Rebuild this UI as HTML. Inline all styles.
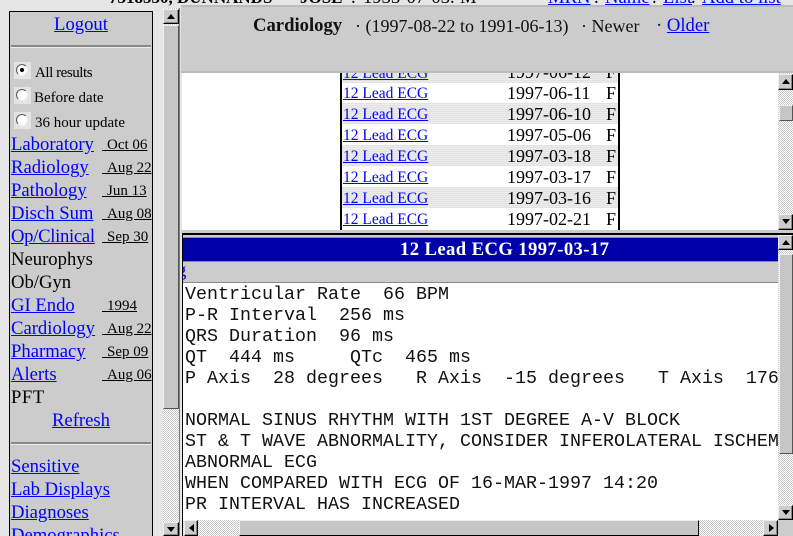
<!DOCTYPE html>
<html><head><meta charset="utf-8"><style>
html,body{margin:0;padding:0;overflow:hidden;width:793px;height:536px}
body{position:relative;background:#e6e6e6;font-family:"Liberation Serif",serif;color:#000}
div{position:absolute;box-sizing:border-box;white-space:pre}
#w{left:0;top:0;width:793px;height:536px;overflow:hidden}
a{color:#00f;text-decoration:underline}
.l{left:11px;font-size:18.67px;line-height:23px;height:23px}
.d{left:102px;font-size:15px;line-height:23px;height:23px;text-decoration:underline}
.d span{letter-spacing:1.25px}
.r{left:35px;font-size:15px;line-height:20px}
.rb{left:14px;width:17px;height:17px;background:#e4e4e4}
.rb i{position:absolute;left:2px;top:2px;width:12px;height:12px;border-radius:50%;background:#fff;border:1px solid;border-color:#555 #eee #eee #555;box-sizing:border-box}
.rb b{position:absolute;left:6px;top:6px;width:4px;height:4px;border-radius:50%;background:#000}
.t{left:161px;font-size:15.5px;line-height:21px}
.dt{left:325px;font-size:18px;line-height:21px}
.f{left:424px;font-size:18px;line-height:21px}
.m{left:185px;font-family:"Liberation Mono",monospace;font-size:18.33px;line-height:21px;color:#111}
.track{background:repeating-conic-gradient(#c8c8c8 0 25%,#fff 0 50%) 0 0/2px 2px}
.btn{background:#ccc;border:1px solid;border-color:#eee #000 #000 #eee;box-shadow:inset -1px -1px 0 #888}
.thumb{background:#c6c6c6;border:1px solid;border-color:#eee #555 #555 #eee}
.up:after,.dn:after,.lt:after,.rt:after{content:"";position:absolute;width:0;height:0}
.up:after{left:3px;top:4px;border:4px solid transparent;border-top:0;border-bottom:5px solid #000}
.dn:after{left:3px;top:4px;border:4px solid transparent;border-bottom:0;border-top:5px solid #000}
.lt:after{left:4px;top:3px;border:4px solid transparent;border-left:0;border-right:5px solid #000}
.rt:after{left:5px;top:3px;border:4px solid transparent;border-right:0;border-left:5px solid #000}
.stripe{left:342px;width:276px;height:21px;background:repeating-linear-gradient(#e2e2e2 0 1px,#ececec 1px 2px)}
.h{top:-13px;font-size:18.67px;line-height:21px}
.hd{top:15px;font-size:18px;line-height:22px;color:#111}
</style></head><body><div id="w">

<div class="h" style="left:109px;font-weight:bold;font-size:17px">7318530, DUNNANDS</div>
<div class="h" style="left:300px;font-weight:bold;font-size:17px">JOSE</div>
<div class="h" style="left:351px">.</div>
<div class="h" style="left:363px">1933-07-03</div>
<div class="h" style="left:450px">.</div>
<div class="h" style="left:460px">M</div>
<div class="h" style="left:548px"><a>MRN</a></div>
<div class="h" style="left:594px">.</div>
<div class="h" style="left:605px"><a>Name</a></div>
<div class="h" style="left:652px">.</div>
<div class="h" style="left:663px"><a>List</a></div>
<div class="h" style="left:691px">.</div>
<div class="h" style="left:702px"><a>Add to list</a></div>

<!-- left panel -->
<div style="left:9px;top:11px;width:144px;height:530px;background:#ccc;border:1px solid #000"></div>
<div style="left:10px;top:13px;width:142px;text-align:center;font-size:18.67px;line-height:23px"><a>Logout</a></div>
<div style="left:11px;top:45px;width:140px;height:3px;background:#888;border-bottom:1px solid #eee"></div>

<div class="rb" style="top:62px"><i></i><b></b></div>
<div class="r" style="top:63px;letter-spacing:-.45px">All results</div>
<div class="rb" style="top:87px"><i></i></div>
<div class="r" style="top:88px;left:34px">Before date</div>
<div class="rb" style="top:112px"><i></i></div>
<div class="r" style="top:113px">36 hour update</div>

<div class="l" style="top:133px"><a>Laboratory</a></div><div class="d" style="top:134px"><span> </span>Oct 06</div>
<div class="l" style="top:156px"><a>Radiology</a></div><div class="d" style="top:157px"><span> </span>Aug 22</div>
<div class="l" style="top:179px"><a>Pathology</a></div><div class="d" style="top:180px"><span> </span>Jun 13</div>
<div class="l" style="top:202px"><a>Disch Sum</a></div><div class="d" style="top:203px"><span> </span>Aug 08</div>
<div class="l" style="top:225px;letter-spacing:-.3px"><a>Op/Clinical</a></div><div class="d" style="top:226px"><span> </span>Sep 30</div>
<div class="l" style="top:248px">Neurophys</div>
<div class="l" style="top:271px">Ob/Gyn</div>
<div class="l" style="top:294px"><a>GI Endo</a></div><div class="d" style="top:295px"><span> </span>1994</div>
<div class="l" style="top:317px"><a>Cardiology</a></div><div class="d" style="top:318px"><span> </span>Aug 22</div>
<div class="l" style="top:340px"><a>Pharmacy</a></div><div class="d" style="top:341px"><span> </span>Sep 09</div>
<div class="l" style="top:363px"><a>Alerts</a></div><div class="d" style="top:364px"><span> </span>Aug 06</div>
<div class="l" style="top:386px;letter-spacing:.5px">PFT</div>
<div style="left:10px;top:409px;width:142px;text-align:center;font-size:18.67px;line-height:23px"><a>Refresh</a></div>
<div style="left:11px;top:442px;width:140px;height:3px;background:#888;border-bottom:1px solid #eee"></div>
<div class="l" style="top:455px"><a>Sensitive</a></div>
<div class="l" style="top:478px"><a>Lab Displays</a></div>
<div class="l" style="top:501px"><a>Diagnoses</a></div>
<div class="l" style="top:524px"><a>Demographics</a></div>

<!-- left scrollbar -->
<div class="track" style="left:163px;top:8px;width:16px;height:528px"></div>
<div class="btn up" style="left:163px;top:9px;width:16px;height:15px"></div>
<div class="thumb" style="left:163px;top:25px;width:16px;height:384px"></div>
<div class="btn dn" style="left:163px;top:522px;width:16px;height:14px"></div>
<div style="left:179px;top:8px;width:1px;height:528px;background:#777"></div>

<!-- top frame -->
<div style="left:181px;top:5px;width:612px;height:68px;background:#ccc;border-top:2px solid #bbb;border-bottom:2px solid #bbb"></div>
<div style="left:253px;top:15px;font-size:18.67px;line-height:22px;font-weight:bold;color:#111">Cardiology</div>
<div class="hd" style="left:355px">&#183; (1997-08-22 to 1991-06-13)</div>
<div class="hd" style="left:581px">&#183; Newer</div>
<div class="hd" style="left:656px;font-size:18.67px">&#183; <a>Older</a></div>

<!-- list frame -->
<div style="left:182px;top:73px;width:596px;height:158px;background:#fff"></div>
<div class="stripe" style="top:62px;clip-path:inset(11px 0 0 0)"></div>
<div class="stripe" style="top:103px"></div>
<div class="stripe" style="top:145px"></div>
<div class="stripe" style="top:187px"></div>
<div style="left:340px;top:73px;width:2px;height:157px;background:#000"></div>
<div style="left:618px;top:73px;width:2px;height:157px;background:#000"></div>
<div style="left:182px;top:73px;width:596px;height:157px;overflow:hidden">
<div class="t" style="top:-10px"><a>12 Lead ECG</a></div><div class="dt" style="top:-11px">1997-06-12</div><div class="f" style="top:-11px">F</div>
<div class="t" style="top:10px"><a>12 Lead ECG</a></div><div class="dt" style="top:10px">1997-06-11</div><div class="f" style="top:10px">F</div>
<div class="t" style="top:31px"><a>12 Lead ECG</a></div><div class="dt" style="top:31px">1997-06-10</div><div class="f" style="top:31px">F</div>
<div class="t" style="top:52px"><a>12 Lead ECG</a></div><div class="dt" style="top:52px">1997-05-06</div><div class="f" style="top:52px">F</div>
<div class="t" style="top:73px"><a>12 Lead ECG</a></div><div class="dt" style="top:73px">1997-03-18</div><div class="f" style="top:73px">F</div>
<div class="t" style="top:94px"><a>12 Lead ECG</a></div><div class="dt" style="top:94px">1997-03-17</div><div class="f" style="top:94px">F</div>
<div class="t" style="top:115px"><a>12 Lead ECG</a></div><div class="dt" style="top:115px">1997-03-16</div><div class="f" style="top:115px">F</div>
<div class="t" style="top:136px"><a>12 Lead ECG</a></div><div class="dt" style="top:136px">1997-02-21</div><div class="f" style="top:136px">F</div>
</div>
<div class="track" style="left:778px;top:73px;width:15px;height:157px"></div>
<div class="btn up" style="left:778px;top:74px;width:15px;height:16px"></div>
<div class="thumb" style="left:779px;top:105px;width:14px;height:16px"></div>
<div class="btn dn" style="left:778px;top:214px;width:15px;height:16px"></div>

<div style="left:181px;top:230px;width:612px;height:3px;background:#ccc"></div>
<div style="left:182px;top:233px;width:611px;height:2px;background:#000"></div>

<!-- detail frame -->
<div style="left:183px;top:235px;width:595px;height:2px;background:#ccc"></div>
<div style="left:183px;top:237px;width:595px;height:24px;background:#0000a8;border-top:1px solid #888"></div>
<div style="left:400px;top:238px;color:#fff;font-weight:bold;font-size:18.67px;line-height:24px;letter-spacing:.4px">12 Lead ECG 1997-03-17</div>
<div style="left:183px;top:261px;width:595px;height:22px;background:#ccc;border-top:1px solid #888;border-bottom:1px solid #888;overflow:hidden"><div style="left:-6px;top:-2px;font-size:18.67px;line-height:21px"><a>g</a></div></div>
<div style="left:183px;top:283px;width:595px;height:237px;background:#fff"></div>
<div style="left:182px;top:233px;width:1px;height:303px;background:#000"></div>
<div class="m" style="top:284px">Ventricular Rate  66 BPM</div>
<div class="m" style="top:305px">P-R Interval  256 ms</div>
<div class="m" style="top:326px">QRS Duration  96 ms</div>
<div class="m" style="top:347px">QT  444 ms     QTc  465 ms</div>
<div style="left:183px;top:368px;width:595px;height:21px;overflow:hidden"><div class="m" style="left:2px;top:0">P Axis  28 degrees   R Axis  -15 degrees   T Axis  176</div></div>
<div class="m" style="top:410px">NORMAL SINUS RHYTHM WITH 1ST DEGREE A-V BLOCK</div>
<div style="left:183px;top:431px;width:595px;height:21px;overflow:hidden"><div class="m" style="left:2px;top:0">ST &amp; T WAVE ABNORMALITY, CONSIDER INFEROLATERAL ISCHEMIA</div></div>
<div class="m" style="top:452px">ABNORMAL ECG</div>
<div class="m" style="top:473px">WHEN COMPARED WITH ECG OF 16-MAR-1997 14:20</div>
<div class="m" style="top:494px">PR INTERVAL HAS INCREASED</div>

<div class="track" style="left:778px;top:235px;width:15px;height:285px"></div>
<div class="btn up" style="left:778px;top:235px;width:15px;height:15px"></div>
<div class="thumb" style="left:779px;top:254px;width:14px;height:200px"></div>
<div class="btn dn" style="left:778px;top:505px;width:15px;height:15px"></div>

<div class="track" style="left:183px;top:520px;width:595px;height:16px"></div>
<div class="btn lt" style="left:184px;top:520px;width:14px;height:16px"></div>
<div class="thumb" style="left:239px;top:520px;width:460px;height:16px;border-color:#eee #000 #000 #eee"></div>
<div class="btn rt" style="left:763px;top:520px;width:15px;height:16px"></div>
<div style="left:778px;top:520px;width:15px;height:16px;background:#ccc"></div>

</div></body></html>
